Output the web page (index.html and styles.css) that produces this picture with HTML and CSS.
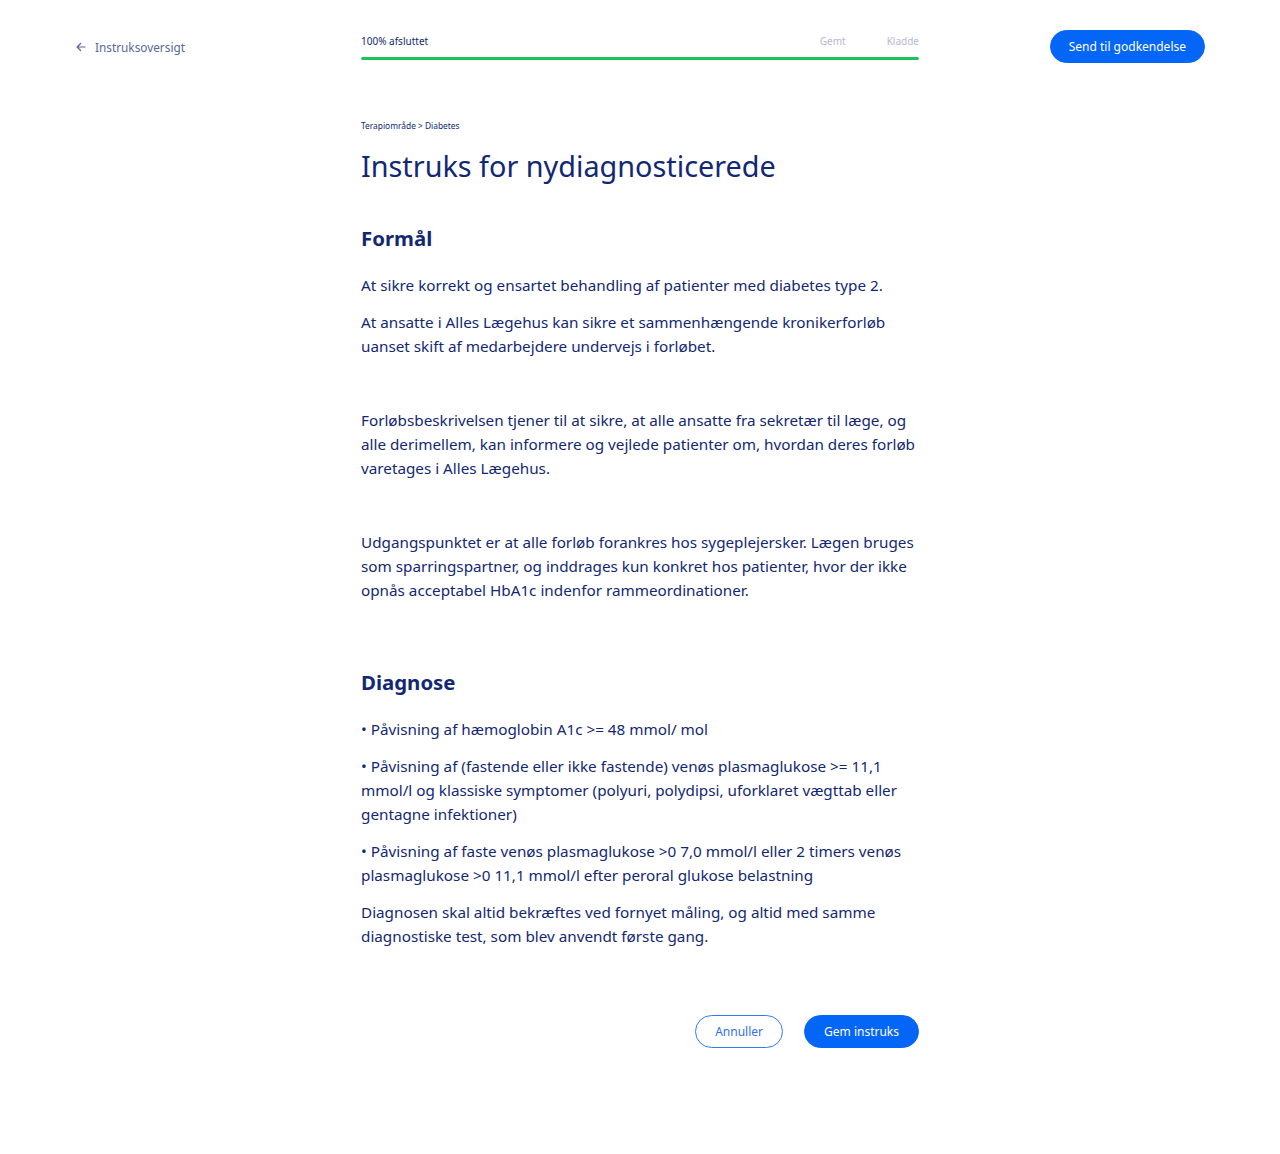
FILE: index.html
```html
<!DOCTYPE html>
<html lang="da">
<head>
<meta charset="utf-8">
<title>Instruks for nydiagnosticerede</title>
<link rel="stylesheet" href="styles.css">
</head>
<body>
<header class="topbar">
  <a class="back" href="#">
    <svg class="back-icon" width="10" height="10" viewBox="0 0 10 10" aria-hidden="true">
      <path d="M9 5H1.3M4.6 1.5L1.1 5l3.5 3.5" fill="none" stroke="currentColor" stroke-width="1.2" stroke-linecap="round" stroke-linejoin="round"/>
    </svg>
    <span>Instruksoversigt</span>
  </a>
  <div class="progress">
    <div class="progress-labels">
      <span class="progress-done">100% afsluttet</span>
      <span class="progress-states">
        <span class="state">Gemt</span>
        <span class="state">Kladde</span>
      </span>
    </div>
    <div class="progress-track"><div class="progress-fill" style="width:100%"></div></div>
  </div>
  <div class="top-action">
    <button class="btn btn-primary btn-top">Send til godkendelse</button>
  </div>
</header>

<main class="doc">
  <div class="crumbs">Terapiområde &gt; Diabetes</div>
  <h1 class="doc-title">Instruks for nydiagnosticerede</h1>

  <h2 class="section-title">Formål</h2>
  <p>At sikre korrekt og ensartet behandling af patienter med diabetes type 2.</p>
  <p>At ansatte i Alles Lægehus kan sikre et sammenhængende kronikerforløb uanset skift af medarbejdere undervejs i forløbet.</p>
  <p class="empty"><br></p>
  <p>Forløbsbeskrivelsen tjener til at sikre, at alle ansatte fra sekretær til læge, og alle derimellem, kan informere og vejlede patienter om, hvordan deres forløb varetages i Alles Lægehus.</p>
  <p class="empty"><br></p>
  <p>Udgangspunktet er at alle forløb forankres hos sygeplejersker. Lægen bruges som sparringspartner, og inddrages kun konkret hos patienter, hvor der ikke opnås acceptabel HbA1c indenfor rammeordinationer.</p>
  <p class="empty"><br></p>

  <h2 class="section-title section-title--later">Diagnose</h2>
  <p>• Påvisning af hæmoglobin A1c &gt;= 48 mmol/ mol</p>
  <p>• Påvisning af (fastende eller ikke fastende) venøs plasmaglukose &gt;= 11,1 mmol/l og klassiske symptomer (polyuri, polydipsi, uforklaret vægttab eller gentagne infektioner)</p>
  <p>• Påvisning af faste venøs plasmaglukose &gt;0 7,0 mmol/l eller 2 timers venøs plasmaglukose &gt;0 11,1 mmol/l efter peroral glukose belastning</p>
  <p>Diagnosen skal altid bekræftes ved fornyet måling, og altid med samme diagnostiske test, som blev anvendt første gang.</p>

  <div class="actions">
    <button class="btn btn-outline">Annuller</button>
    <button class="btn btn-primary">Gem instruks</button>
  </div>
</main>
</body>
</html>
```

FILE: styles.css
```css
* { box-sizing: border-box; }

html, body {
  margin: 0;
  padding: 0;
  background: #ffffff;
}

body {
  font-family: "Noto Sans", "Open Sans", "DejaVu Sans", sans-serif;
  color: #122874;
  min-height: 1154px;
}

.topbar {
  display: grid;
  grid-template-columns: 1fr 558px 1fr;
  align-items: start;
  padding-top: 30px;
}

.back {
  display: flex;
  align-items: center;
  gap: 9px;
  height: 33px;
  padding-left: 76px;
  color: #5a6897;
  text-decoration: none;
  font-size: 11.8px;
}

.back-icon { display: block; }

.progress {
  padding-top: 3px;
}

.progress-labels {
  display: flex;
  justify-content: space-between;
  font-size: 10px;
  line-height: 16px;
}

.progress-done { color: #122874; }

.progress-states {
  display: flex;
  gap: 41px;
}

.state { color: #b4b9cc; }

.progress-track {
  margin-top: 8px;
  height: 3px;
  border-radius: 2px;
  background: #e4e7ef;
  overflow: hidden;
}

.progress-fill {
  height: 100%;
  background: #1cc35a;
  border-radius: 2px;
}

.top-action {
  display: flex;
  justify-content: flex-end;
  padding-right: 75px;
}

.btn {
  font-family: inherit;
  font-size: 12px;
  height: 33px;
  padding: 0 19px;
  border-radius: 17px;
  cursor: pointer;
  line-height: 1;
}

.btn-top {
  padding: 0 18px;
}

.btn-primary {
  background: #0466f6;
  border: 1px solid #0466f6;
  color: #ffffff;
}

.btn-outline {
  background: #ffffff;
  border: 1px solid #2f7cf6;
  color: #2f6ff0;
}

.doc {
  width: 558px;
  margin: 0 auto;
  padding-top: 56px;
  padding-bottom: 80px;
}

.crumbs {
  font-size: 8.4px;
  line-height: 14px;
}

.doc-title {
  margin: 13px 0 0;
  font-size: 28.8px;
  line-height: 40px;
  font-weight: 400;
}

.section-title {
  margin: 37px 0 20px;
  font-size: 20.4px;
  line-height: 30px;
  font-weight: 700;
}

.section-title--later {
  margin-top: 28px;
  margin-bottom: 20px;
}

.doc p {
  margin: 0 0 13px;
  font-size: 15.25px;
  line-height: 24px;
}

.actions {
  display: flex;
  justify-content: flex-end;
  gap: 21px;
  margin-top: 67px;
}
```
